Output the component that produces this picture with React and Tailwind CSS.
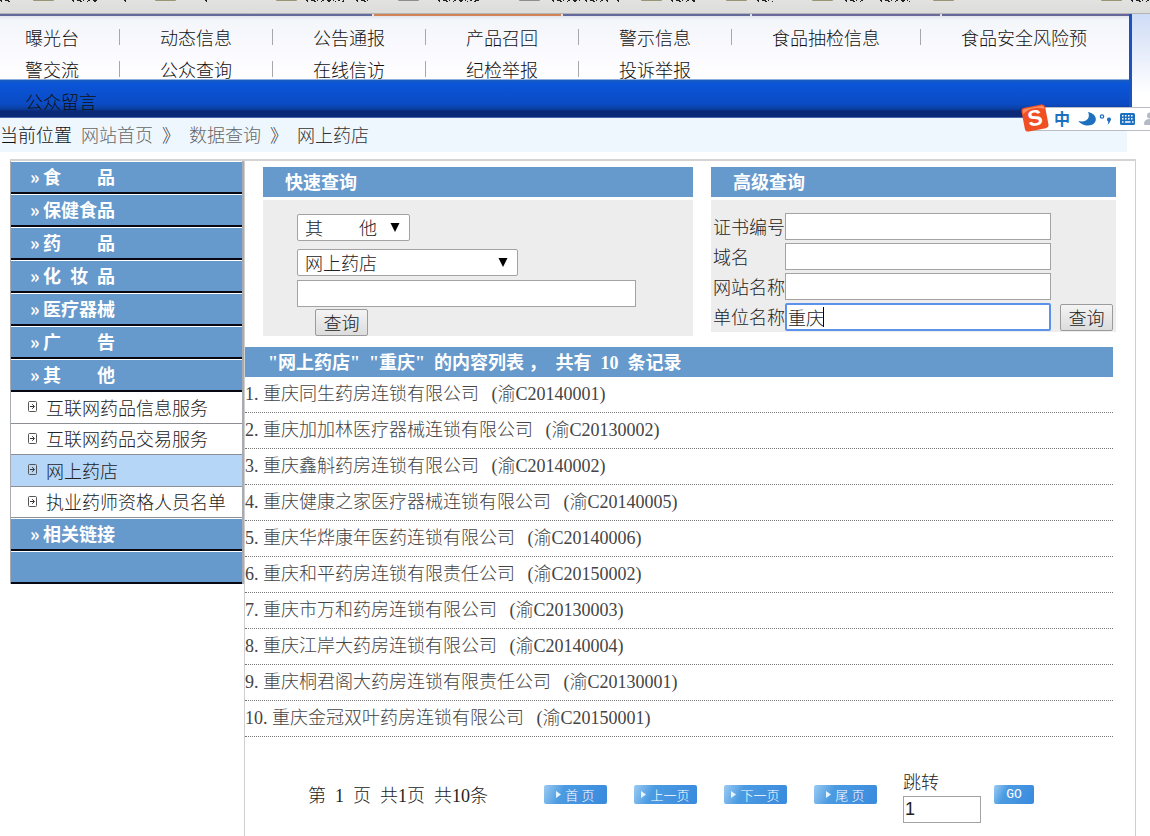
import React from "react";

const navRows = [
  ["曝光台", "动态信息", "公告通报", "产品召回", "警示信息", "食品抽检信息", "食品安全风险预"],
  ["警交流", "公众查询", "在线信访", "纪检举报", "投诉举报"],
  ["公众留言"],
];

const categories = ["食　　品", "保健食品", "药　　品", "化\u2002妆\u2002品", "医疗器械", "广　　告", "其　　他"];
const services = ["互联网药品信息服务", "互联网药品交易服务", "网上药店", "执业药师资格人员名单"];

const records = [
  ["重庆同生药房连锁有限公司", "C20140001"],
  ["重庆加加林医疗器械连锁有限公司", "C20130002"],
  ["重庆鑫斛药房连锁有限公司", "C20140002"],
  ["重庆健康之家医疗器械连锁有限公司", "C20140005"],
  ["重庆华烨康年医药连锁有限公司", "C20140006"],
  ["重庆和平药房连锁有限责任公司", "C20150002"],
  ["重庆市万和药房连锁有限公司", "C20130003"],
  ["重庆江岸大药房连锁有限公司", "C20140004"],
  ["重庆桐君阁大药房连锁有限责任公司", "C20130001"],
  ["重庆金冠双叶药房连锁有限公司", "C20150001"],
];

const folders = [
  [33, "#9a9572"], [155, "#9a9572"], [276, "#9a9572"], [398, "#8f8f8f"], [519, "#8f8f8f"],
  [641, "#9a9572"], [726, "#9a9572"], [812, "#9a9572"], [933, "#9a9572"], [1101, "#9a9572"],
];
const flecks = [
  [0, 11], [72, 97], [124, 128], [205, 208], [306, 344], [356, 371], [438, 480],
  [552, 580], [585, 608], [617, 622], [671, 695], [757, 773], [845, 866], [880, 912], [1131, 1150],
];

/* Half-width Latin text: digits take half an ideograph. */
function Half({ children }) {
  return <span className="whitespace-pre font-['Liberation_Serif',serif]">{children}</span>;
}

function BookmarkBar() {
  return (
    <div className="h-[14px] overflow-hidden border-b border-[#b4b4b8] bg-linear-to-b from-[#e2e2e1] to-[#dcdcdb]">
      <svg className="h-[14px] w-[1150px]" viewBox="0 0 1150 14" aria-hidden="true">
        {folders.map(([x, color]) => (
          <rect key={x} x={x} y="-2" width="21" height="3" rx="1" fill={color} />
        ))}
        {flecks.map(([a, b]) => (
          <g key={a} stroke="#222">
            <path d={`M${a} 0.5H${b}`} strokeWidth="1" strokeDasharray="2 3 4 2 1 4" />
            <path d={`M${a + 1} 1.5H${b}`} strokeWidth="1" strokeDasharray="1 6 2 5" />
          </g>
        ))}
      </svg>
    </div>
  );
}

function TabLine() {
  return (
    <div className="flex h-0.5 gap-0.5" aria-hidden="true">
      <span className="grow-[371] bg-[#626a9c]" />
      <span className="grow-[187] bg-[#d08458]" />
      <span className="grow-[187] bg-[#626a9c]" />
      <span className="grow-[187] bg-[#6c6a9c]" />
      <span className="grow-[187] bg-[#66659c]" />
    </div>
  );
}

function Navigation() {
  return (
    <div className="flex">
      <header className="min-w-0 flex-1 border-r-3 border-[#1c52bd] bg-[linear-gradient(#d9dee6_0px,#f3f6fa_6px,#fbfaff_40px,#ffffff_65px,#1a5cc0_66px,#0a55d8_70px,#0b4bc4_90px,#0b3fa0_95px,#0a2a78_97px,#0a2a78_103px,#8fa5d8_104px)]">
        <TabLine />
        <nav className="pt-[5px] pb-px text-[#111]">
          {navRows.map((row) => (
            <div key={row[0]} className="flex h-8 items-center gap-10 pl-[25px] whitespace-nowrap">
              {row.map((item, i) => (
                <React.Fragment key={item}>
                  {i > 0 && <span className="h-4 w-px bg-[#a8a8ac]" />}
                  <a href="#" className="hover:underline">{item}</a>
                </React.Fragment>
              ))}
            </div>
          ))}
        </nav>
      </header>
      <div className="w-[18px] bg-[linear-gradient(#cfdcf6,#ffffff_80px)]" />
    </div>
  );
}

function Breadcrumb() {
  return (
    <div className="mr-[23px] flex h-[34px] items-center gap-[9px] bg-[#eff7fe] pb-0.5 whitespace-nowrap text-[#333]">
      <span className="text-[#111]">当前位置</span>
      <a href="#" className="text-[#666]">网站首页</a>
      <span>》</span>
      <a href="#" className="text-[#666]">数据查询</a>
      <span>》</span>
      <span>网上药店</span>
    </div>
  );
}

function Category({ children }) {
  return (
    <div className="h-[33px] border-t border-b-2 border-t-white border-b-[#080812] bg-[#6699cc] pl-[19px] leading-7 font-bold text-white">
      {children && (
        <a href="#" className="flex">
          <span className="w-[13px]">»</span>
          <span>{children}</span>
        </a>
      )}
    </div>
  );
}

function ArrowBullet() {
  return (
    <svg className="h-[11px] w-[9px] shrink-0" viewBox="0 0 9 11" fill="none" stroke="#333" aria-hidden="true">
      <rect x="0.5" y="0.5" width="8" height="10" rx="1" stroke="#555" />
      <path d="M2 5.5H6M4.2 3.2L6.5 5.5L4.2 7.8" />
    </svg>
  );
}

function Sidebar() {
  return (
    <aside className="w-[234px] shrink-0">
      <div className="border-r-2 border-l border-[#a9abb2]">
        {categories.map((c) => <Category key={c}>{c}</Category>)}
        <ul className="grid h-[126px] grid-rows-4">
          {services.map((s) => (
            <li
              key={s}
              className={
                s === "网上药店"
                  ? "flex items-center border-b border-[#8c8f94] bg-[#b5d6f7] pb-px pl-[17px]"
                  : "flex items-center border-b border-[#8c8f94] bg-white pb-px pl-[17px]"
              }
            >
              <a href="#" className="flex items-center gap-[9px] whitespace-nowrap text-[#222]">
                <ArrowBullet />
                {s}
              </a>
            </li>
          ))}
        </ul>
        <Category>相关链接</Category>
        <Category />
      </div>
    </aside>
  );
}

function Select({ label, value, className }) {
  return (
    <div className={className}>
      <select
        aria-label={label}
        defaultValue={value}
        className="h-[27px] w-full appearance-none rounded-xs border border-[#a3a3a3] bg-white pl-[7px] leading-[25px] text-[#222]"
      >
        <option>{value}</option>
      </select>
      <svg className="pointer-events-none absolute top-[9px] right-[10px] h-[9px] w-[10px]" viewBox="0 0 10 9" aria-hidden="true">
        <path d="M0.500 0H9.500L5 9Z" fill="#000" />
      </svg>
    </div>
  );
}

function QueryButton() {
  return (
    <button
      type="button"
      className="h-[27px] w-[53px] rounded-xs border border-[#9b9b9b] bg-linear-to-b from-[#f4f4f4] to-[#dcdcdc] leading-[25px] text-[#222]"
    >
      查询
    </button>
  );
}

function PanelTitle({ children }) {
  return (
    <h2 className="mb-[3px] h-[30px] bg-[#6699cc] pl-[22px] leading-7 font-bold text-white">{children}</h2>
  );
}

function QuickSearch() {
  return (
    <section>
      <PanelTitle>快速查询</PanelTitle>
      <form className="flex h-[136px] flex-col items-start bg-[#ededed] pt-[14px] pl-[34px]">
        <Select label="类别" value="其　　他" className="relative w-[113px]" />
        <Select label="项目" value="网上药店" className="relative mt-2 w-[221px]" />
        <input
          aria-label="关键字"
          className="mt-1 h-[27px] w-[339px] max-w-full border border-[#a3a3a3] bg-white px-0.5"
        />
        <div className="mt-0.5 pl-[18px]"><QueryButton /></div>
      </form>
    </section>
  );
}

function AdvancedSearch() {
  const input = "h-[27px] w-full min-w-0 border border-[#a3a3a3] bg-white px-0.5";
  return (
    <section>
      <PanelTitle>高级查询</PanelTitle>
      <form className="grid grid-cols-[72px_1fr_62px] gap-y-[3px] bg-[#ededed] pt-[13px] pr-[3px] pb-px pl-0.5 leading-[26px] text-[#222]">
        <label htmlFor="cert" className="whitespace-nowrap">证书编号</label>
        <input id="cert" className={input} />
        <span />
        <label htmlFor="domain" className="whitespace-nowrap">域名</label>
        <input id="domain" className={input} />
        <span />
        <label htmlFor="site" className="whitespace-nowrap">网站名称</label>
        <input id="site" className={input} />
        <span />
        <label htmlFor="unit" className="whitespace-nowrap">单位名称</label>
        <div className="relative flex">
          <input
            id="unit"
            defaultValue="重庆"
            className="h-7 w-full min-w-0 rounded-xs border-2 border-[#5b92ea] bg-white px-px text-[#222] outline-none"
          />
          <span className="absolute top-1 left-[38px] h-5 w-px bg-black" />
        </div>
        <div className="flex items-center pl-[9px]"><QueryButton /></div>
      </form>
    </section>
  );
}

function Results() {
  return (
    <section className="mt-[11px] mr-[22px]">
      <h2 className="h-[30px] bg-[#6699cc] pl-[23px] leading-7 font-bold whitespace-nowrap text-white">
        <Half>{'"'}</Half>网上药店<Half>{'"  "'}</Half>重庆<Half>{'"  '}</Half>的内容列表
        <Half>{" "}</Half>，<Half>{"  "}</Half>共有<Half>{"  10  "}</Half>条记录
      </h2>
      <ul>
        {records.map(([name, code], i) => (
          <li key={code} className="h-9 border-b border-dotted border-[#777] leading-[30px] whitespace-nowrap text-[#444]">
            <Half>{`${i + 1}. `}</Half>
            <a href="#">
              {name}
              <Half>{"  \u2009("}</Half>渝<Half>{`${code})`}</Half>
            </a>
          </li>
        ))}
      </ul>
    </section>
  );
}

function PageButton({ children }) {
  return (
    <button
      type="button"
      className="flex h-[19px] w-[63px] items-center justify-center gap-1 rounded-xs bg-[linear-gradient(115deg,#9ccbf2,#4b9be2_30%,#3a8ade)] text-[13px] leading-[19px] whitespace-nowrap text-white"
    >
      <svg className="h-[7px] w-[5px] shrink-0" viewBox="0 0 5 7" aria-hidden="true">
        <path d="M0 0L5 3.5L0 7Z" fill="#e6f4ff" />
      </svg>
      {children}
    </button>
  );
}

function Pagination() {
  return (
    <div className="mt-[29px] flex items-center pb-[13px] pl-[63px] whitespace-nowrap text-[#222]">
      <p className="w-[236px]">
        第<Half>{"  1  "}</Half>页<Half>{"  "}</Half>共<Half>1</Half>页<Half>{"  "}</Half>共<Half>10</Half>条
      </p>
      <div className="flex gap-[27px]">
        <PageButton>{"首\u2005页"}</PageButton>
        <PageButton>上一页</PageButton>
        <PageButton>下一页</PageButton>
        <PageButton>{"尾\u2005页"}</PageButton>
      </div>
      <div className="ml-[26px] flex w-[78px] flex-col">
        <label htmlFor="jump" className="leading-[30px]">跳转</label>
        <input
          id="jump"
          defaultValue="1"
          className="h-[27px] w-full border border-[#a3a3a3] bg-white px-px font-['Liberation_Sans',sans-serif]"
        />
      </div>
      <button
        type="button"
        className="ml-[13px] h-[19px] w-10 rounded-xs bg-[linear-gradient(115deg,#9ccbf2,#4b9be2_30%,#3a8ade)] font-['Liberation_Mono',monospace] text-[13px] leading-[19px] text-white"
      >
        GO
      </button>
    </div>
  );
}

function InputMethodBar() {
  return (
    <div className="absolute top-[103px] right-0 h-[30px] w-[130px] overflow-hidden">
      <div className="mt-1 ml-3 h-6 border-y border-[#b9bcc4] bg-white" />
      <svg className="absolute inset-0 h-[30px] w-[130px]" viewBox="0 0 130 30" aria-hidden="true">
        <g transform="rotate(-11 15 15)">
          <rect x="3" y="3" width="24" height="24" rx="3.5" fill="#f04e23" />
          <path d="M4 9Q14 2 26 8V6Q26 4 23 4H7Q4 4 4 7Z" fill="#f98b5e" />
          <text x="15" y="22.5" textAnchor="middle" fontFamily="'Liberation Sans', sans-serif" fontSize="22" fontWeight="700" fill="#fff">S</text>
        </g>
        <text x="34" y="22" fontFamily="'Noto Sans CJK SC', sans-serif" fontSize="16" fontWeight="700" fill="#1d6fc0">中</text>
        <path d="M68 9C79 11 78 22.500 68 22.500C64 22.500 60 20.500 58.500 18C66 20 71 15 68 9Z" fill="#1d6fc0" />
        <circle cx="82" cy="13.500" r="1.700" fill="none" stroke="#1d6fc0" strokeWidth="1.200" />
        <path d="M87 16.500a2 2 0 1 1 3.200 1.500Q90 20.500 87.500 21.500Q88.500 20 88.200 18.500Q87 18 87 16.500Z" fill="#1d6fc0" />
        <rect x="100" y="10" width="15" height="12" rx="1.500" fill="#1d6fc0" />
        <g stroke="#fff" strokeWidth="1.500">
          <path d="M102 12.700H114" strokeDasharray="1.500 1.500" />
          <path d="M102 15.700H114" strokeDasharray="1.500 1.500" />
          <path d="M102 19H103.500M105 19H110.500M112 19H113.500" />
        </g>
        <circle cx="130" cy="12.500" r="3" fill="#b4bac6" />
        <path d="M124 21Q124 16 130 16V22H125Q124 22 124 21Z" fill="#b4bac6" />
      </svg>
    </div>
  );
}

export default function App() {
  return (
    <div className="relative flex min-h-screen flex-col bg-white font-['Noto_Sans_CJK_SC',sans-serif] text-[18px] leading-6 font-light">
      <BookmarkBar />
      <Navigation />
      <Breadcrumb />
      <div className="mt-[7px] mr-3.5 ml-2.5 flex flex-1 border-t-2 border-[#d6d2d2]">
        <Sidebar />
        <main className="min-w-0 flex-1 border-x border-[#cfcfcf]">
          <div className="grid grid-cols-[430fr_405fr] items-start gap-[18px] pt-1.5 pr-[19px] pl-[18px]">
            <QuickSearch />
            <AdvancedSearch />
          </div>
          <Results />
          <Pagination />
        </main>
      </div>
      <InputMethodBar />
    </div>
  );
}
